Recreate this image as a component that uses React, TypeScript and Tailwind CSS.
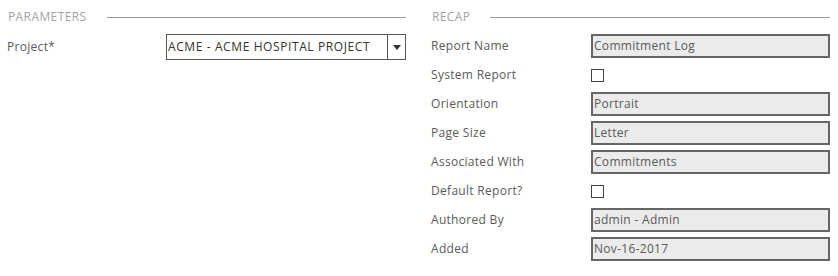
const recap: { label: string; value?: string; check?: boolean }[] = [
  { label: "Report Name", value: "Commitment Log" },
  { label: "System Report", check: true },
  { label: "Orientation", value: "Portrait" },
  { label: "Page Size", value: "Letter" },
  { label: "Associated With", value: "Commitments" },
  { label: "Default Report?", check: true },
  { label: "Authored By", value: "admin - Admin" },
  { label: "Added", value: "Nov-16-2017" },
];

function Heading({ title }: { title: string }) {
  return (
    <div className="flex h-6 items-center gap-5 pl-[1px]">
      <span className="text-[12px] tracking-[0.4px] text-[#a3a3a3]">{title}</span>
      <div className="h-px flex-1 bg-[#9a9a9a]" />
    </div>
  );
}

export default function App() {
  return (
    <div className="grid h-[276px] w-[838px] grid-cols-2 gap-[25px] bg-white pl-[7px] pr-[8px] pt-[5px] font-['Open_Sans',sans-serif] text-[12px] text-[#5a5a5a]">
      <div className="flex flex-col gap-[5px]">
        <Heading title="PARAMETERS" />
        <div className="flex h-[26px] items-center">
          <div className="w-[159px] tracking-[0.3px]">Project*</div>
          <div className="flex h-[26px] flex-1 border border-[#555] bg-white">
            <div className="flex flex-1 items-center pl-[1px] text-[12px] tracking-[0.6px] text-[#333]">
              ACME - ACME HOSPITAL PROJECT
            </div>
            <div className="flex w-[18px] items-center justify-center border-l border-[#555]">
              <svg width="8" height="5" viewBox="0 0 8 5">
                <path d="M0 0h8L4 5z" fill="#333" />
              </svg>
            </div>
          </div>
        </div>
      </div>

      <div className="flex flex-col gap-[5px]">
        <Heading title="RECAP" />
        {recap.map((r) => (
          <div key={r.label} className="flex h-6 items-center">
            <div className="w-[160px] tracking-[0.3px]">{r.label}</div>
            {r.check ? (
              <div className="h-[13px] w-[13px] border border-[#444] bg-white" />
            ) : (
              <div className="flex h-6 flex-1 items-center border-2 border-[#666] bg-[#ebebeb] pl-[1px] tracking-[0.3px]">
                {r.value}
              </div>
            )}
          </div>
        ))}
      </div>
    </div>
  );
}
